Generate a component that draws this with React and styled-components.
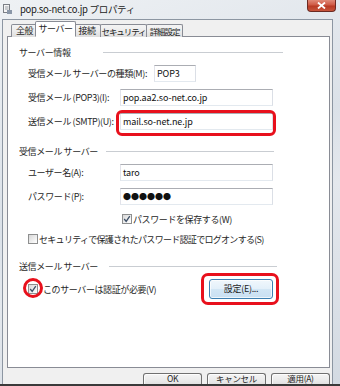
import React from "react";
import styled, { createGlobalStyle } from "styled-components";

const GlobalStyle = createGlobalStyle`
  html, body {
    margin: 0;
    padding: 0;
    background: #ffffff;
  }
  body {
    font-family: "Noto Sans CJK JP", "Noto Sans", sans-serif;
    color: #222;
  }
`;

const Window = styled.div`
  width: 340px;
  height: 386px;
  overflow: hidden;
  display: flex;
  flex-direction: column;
  background: linear-gradient(160deg, #eef1f4 0%, #dbe1e8 45%, #e4e8ed 60%, #d3dae2 100%);
`;

const TitleBar = styled.div`
  height: 19px;
  flex: none;
  display: flex;
  align-items: flex-start;
  padding-left: 3px;
`;

const TitleIcon = styled.svg`
  margin-top: 4px;
  flex: none;
`;

const TitleText = styled.span`
  margin: 2px 0 0 8px;
  font-size: 9.5px;
  line-height: 14px;
  letter-spacing: -0.3px;
  color: #1b1b1b;
`;

const CloseButton = styled.div`
  margin-left: auto;
  margin-right: 4px;
  width: 29px;
  height: 12px;
  border: 1px solid #6b2a22;
  border-top: none;
  border-radius: 0 0 4px 4px;
  background: linear-gradient(180deg, #e08a78 0%, #cf5a45 45%, #b83a24 55%, #c8553c 100%);
  display: flex;
  align-items: center;
  justify-content: center;
  box-sizing: border-box;
`;

const Client = styled.div`
  flex: 1;
  min-height: 0;
  overflow: hidden;
  margin: 0 7px 0 2px;
  border: 1px solid #8c96a2;
  border-bottom: none;
  background: #f0f0f0;
  display: flex;
  flex-direction: column;
  padding: 0 2px 0 4px;
`;

const TabStrip = styled.div`
  height: 17px;
  flex: none;
  display: flex;
  align-items: flex-end;
  padding-left: 4px;
  position: relative;
  z-index: 2;
  margin-bottom: -1px;
`;

const Tab = styled.div`
  box-sizing: border-box;
  width: ${(p) => (p.$active ? p.$w + 4 : p.$w)}px;
  height: ${(p) => (p.$active ? 16 : 13)}px;
  margin: 0 ${(p) => (p.$active ? -3 : -1)}px 0 ${(p) => (p.$active ? -2 : 0)}px;
  border: 1px solid #898c95;
  border-bottom: ${(p) => (p.$active ? "1px solid #ffffff" : "none")};
  border-radius: 2px 2px 0 0;
  background: ${(p) =>
    p.$active ? "#ffffff" : "linear-gradient(180deg, #f4f4f4 0%, #ececec 50%, #dedede 100%)"};
  position: relative;
  z-index: ${(p) => (p.$active ? 3 : 1)};
  font-size: ${(p) => (p.$narrow ? 8.5 : 9)}px;
  letter-spacing: ${(p) => (p.$narrow ? -1.1 : -0.5)}px;
  line-height: ${(p) => (p.$active ? 14 : 12)}px;
  text-align: center;
  white-space: nowrap;
  color: #1e1e1e;
`;

const Panel = styled.div`
  height: 332px;
  flex: none;
  box-sizing: border-box;
  border: 1px solid #898c95;
  background: #ffffff;
  display: flex;
  flex-direction: column;
  padding-top: 8px;
`;

const GroupHeader = styled.div`
  display: flex;
  align-items: center;
  height: 14px;
  padding-left: 11px;
  margin-top: ${(p) => p.$mt || 0}px;
`;

const GroupTitle = styled.span`
  width: ${(p) => p.$w}px;
  flex: none;
  font-size: 9px;
  letter-spacing: -0.4px;
  color: #2a2a2a;
  white-space: nowrap;
`;

const GroupLine = styled.div`
  width: ${(p) => p.$w}px;
  height: 1px;
  background: #c9cdd2;
`;

const Row = styled.div`
  display: flex;
  align-items: center;
  height: ${(p) => p.$h || 17}px;
  padding-left: ${(p) => p.$pl || 20}px;
  padding-right: ${(p) => p.$pr || 0}px;
  margin-top: ${(p) => p.$mt || 0}px;
`;

const Label = styled.span`
  width: ${(p) => p.$w || 92}px;
  flex: none;
  font-size: 9px;
  letter-spacing: -0.4px;
  white-space: nowrap;
  color: #262626;
`;

const Field = styled.div`
  box-sizing: border-box;
  width: ${(p) => p.$w || 153}px;
  height: 17px;
  border: 1px solid;
  border-color: #abadb3 #dbdfe6 #e3e9ef #e2e3ea;
  background: #ffffff;
  padding-left: 2px;
  font-size: ${(p) => (p.$dots ? 8 : 9)}px;
  line-height: 15px;
  letter-spacing: ${(p) => (p.$dots ? "0px" : "-0.1px")};
  color: #111;
  white-space: nowrap;
`;

const Anchor = styled.div`
  position: relative;
  display: flex;
  align-items: center;
`;

const Highlight = styled.div`
  position: absolute;
  top: ${(p) => p.$t}px;
  left: ${(p) => p.$l}px;
  right: ${(p) => p.$r}px;
  bottom: ${(p) => p.$b}px;
  border: 3px solid #e8101c;
  border-radius: ${(p) => p.$radius || 6}px;
  pointer-events: none;
`;

const Box = styled.div`
  box-sizing: border-box;
  width: 10px;
  height: 10px;
  flex: none;
  border: 1px solid #8e8f8f;
  background: linear-gradient(135deg, #d8d8d8 0%, #f4f4f4 70%, #ffffff 100%);
  display: flex;
  align-items: center;
  justify-content: center;
`;

const CheckText = styled.span`
  margin-left: ${(p) => p.$ml || 1}px;
  font-size: 9px;
  letter-spacing: ${(p) => (p.$tight ? -0.7 : -0.4)}px;
  white-space: nowrap;
  color: #262626;
`;

const PushButton = styled.div`
  box-sizing: border-box;
  width: ${(p) => p.$w}px;
  height: 20px;
  flex: none;
  margin-left: ${(p) => (p.$push ? "auto" : "0")};
  border: 1px solid #3c7fb1;
  border-radius: 3px;
  background: linear-gradient(180deg, #f0f7fc 0%, #e3f0fa 48%, #d2e6f5 52%, #c9e0f2 100%);
  box-shadow: inset 0 0 0 1px rgba(255, 255, 255, 0.7);
  font-size: 9px;
  letter-spacing: -0.3px;
  text-align: center;
  line-height: 18px;
  color: #1e1e1e;
  white-space: nowrap;
`;

const FooterButton = styled.div`
  box-sizing: border-box;
  width: 59px;
  height: 11px;
  flex: none;
  border: 1px solid #707070;
  border-bottom: none;
  border-radius: 3px 3px 0 0;
  background: linear-gradient(180deg, #f4f4f4 0%, #ebebeb 60%, #e2e2e2 100%);
  box-shadow: inset 1px 1px 0 rgba(255, 255, 255, 0.8);
  font-size: 8.5px;
  letter-spacing: -0.3px;
  text-align: center;
  line-height: 9px;
  color: #1e1e1e;
  white-space: nowrap;
`;

const Footer = styled.div`
  display: flex;
  justify-content: flex-end;
  gap: 5px;
  padding-top: 5px;
  flex: none;
`;

const BottomEdge = styled.div`
  height: 2px;
  flex: none;
  background: #3a3a3a;
`;

const Check = ({ checked }) => (
  <Box>
    {checked && (
      <svg width="8" height="8" viewBox="0 0 8 8">
        <polyline points="1.2,4 3.2,6.4 6.8,1.2" fill="none" stroke="#3d4f66" strokeWidth="1.3" />
      </svg>
    )}
  </Box>
);

const tabs = [
  { label: "全般", w: 27 },
  { label: "サーバー", w: 37, active: true },
  { label: "接続", w: 28 },
  { label: "セキュリティ", w: 47, narrow: true },
  { label: "詳細設定", w: 37, narrow: true },
];

const App = () => {
  return (
    <>
      <GlobalStyle />
      <Window>
        <TitleBar>
          <TitleIcon width="9" height="10" viewBox="0 0 9 10">
            <rect x="0.5" y="0.5" width="6" height="8" fill="#f4f4f4" stroke="#7b7f86" />
            <line x1="2" y1="3" x2="5.5" y2="3" stroke="#9aa0a8" />
            <line x1="2" y1="5" x2="5.5" y2="5" stroke="#9aa0a8" />
            <rect x="4" y="6" width="5" height="4" fill="#8a97a8" />
          </TitleIcon>
          <TitleText>pop.so-net.co.jp プロパティ</TitleText>
          <CloseButton>
            <svg width="9" height="7" viewBox="0 0 9 7">
              <path d="M1 0.5 L8 6.5 M8 0.5 L1 6.5" stroke="#ffffff" strokeWidth="1.8" />
            </svg>
          </CloseButton>
        </TitleBar>

        <Client>
          <TabStrip>
            {tabs.map((t) => (
              <Tab key={t.label} $w={t.w} $active={t.active} $narrow={t.narrow}>
                {t.label}
              </Tab>
            ))}
          </TabStrip>

          <Panel>
            <GroupHeader>
              <GroupTitle $w={84}>サーバー情報</GroupTitle>
              <GroupLine $w={180} />
            </GroupHeader>
            <Row $mt={6}>
              <Label $w={126}>受信メール サーバーの種類(M):</Label>
              <Field $w={42}>POP3</Field>
            </Row>
            <Row $mt={7}>
              <Label>受信メール (POP3)(I):</Label>
              <Field>pop.aa2.so-net.co.jp</Field>
            </Row>
            <Row $mt={7}>
              <Label>送信メール (SMTP)(U):</Label>
              <Anchor>
                <Field>mail.so-net.ne.jp</Field>
                <Highlight $t={-3} $l={-4} $r={-3} $b={-6} />
              </Anchor>
            </Row>

            <GroupHeader $mt={14}>
              <GroupTitle $w={87}>受信メール サーバー</GroupTitle>
              <GroupLine $w={168} />
            </GroupHeader>
            <Row $mt={6}>
              <Label>ユーザー名(A):</Label>
              <Field>taro</Field>
            </Row>
            <Row $mt={7}>
              <Label>パスワード(P):</Label>
              <Field $dots>●●●●●●</Field>
            </Row>
            <Row $mt={8} $h={12} $pl={114}>
              <Check checked />
              <CheckText>パスワードを保存する(W)</CheckText>
            </Row>
            <Row $mt={8} $h={12}>
              <Check />
              <CheckText $tight>セキュリティで保護されたパスワード認証でログオンする(S)</CheckText>
            </Row>

            <GroupHeader $mt={14}>
              <GroupTitle $w={90}>送信メール サーバー</GroupTitle>
              <GroupLine $w={168} />
            </GroupHeader>
            <Row $mt={6} $h={20} $pr={56}>
              <Anchor>
                <Check checked />
                <Highlight $t={-6} $l={-5} $r={-5} $b={-4} $radius={10} />
              </Anchor>
              <CheckText $ml={5}>このサーバーは認証が必要(V)</CheckText>
              <PushButton $w={64} $push>
                <Anchor>
                  <span style={{ width: "100%" }}>設定(E)...</span>
                  <Highlight $t={-7} $l={-9} $r={-7} $b={-7} $radius={7} />
                </Anchor>
              </PushButton>
            </Row>
          </Panel>

          <Footer>
            <FooterButton>OK</FooterButton>
            <FooterButton>キャンセル</FooterButton>
            <FooterButton>適用(A)</FooterButton>
          </Footer>
        </Client>
        <BottomEdge />
      </Window>
    </>
  );
};

export default App;
